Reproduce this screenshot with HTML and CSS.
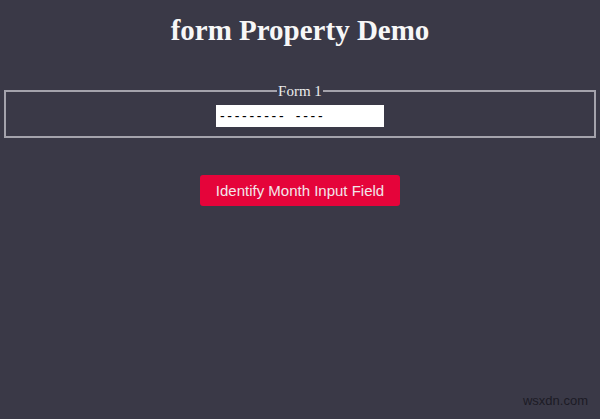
FILE: index.html
```html
<!DOCTYPE html>
<html>
<head>
<meta charset="utf-8">
<link rel="stylesheet" href="styles.css">
</head>
<body>
<h1 class="title">form Property Demo</h1>
<form class="demo-form">
  <fieldset class="group">
    <legend class="legend">Form 1</legend>
    <div class="field-row">
      <div class="month-input">--------- ----</div>
    </div>
  </fieldset>
</form>
<div class="actions">
  <button class="btn" type="button">Identify Month Input Field</button>
</div>
<div class="watermark">wsxdn.com</div>
</body>
</html>
```
FILE: styles.css
```css
html, body {
  margin: 0;
  padding: 0;
  height: 100%;
}
body {
  background: #3a3947;
  color: #f4f4f4;
  font-family: "Liberation Serif", "Times New Roman", serif;
  position: relative;
  overflow: hidden;
}
.title {
  margin: 14px 0 0;
  font-size: 29px;
  line-height: 32px;
  font-weight: bold;
  text-align: center;
  color: #f7f7f7;
}
.demo-form {
  margin: 37px 4px 0;
}
.group {
  margin: 0;
  border: 2px solid #a4a3ac;
  padding: 6px 8px 9px;
}
.legend {
  margin: 0 auto;
  padding: 0 1px;
  font-size: 15px;
  line-height: 16px;
  color: #ececec;
}
.field-row {
  display: flex;
  justify-content: center;
}
.month-input {
  width: 168px;
  height: 22px;
  box-sizing: border-box;
  background: #ffffff;
  color: #000;
  font-family: "Liberation Sans", Arial, sans-serif;
  font-size: 14px;
  line-height: 22px;
  padding-left: 4px;
  letter-spacing: 2.7px;
  word-spacing: 3px;
  white-space: pre;
}
.actions {
  display: flex;
  justify-content: center;
  margin-top: 37px;
}
.btn {
  width: 200px;
  height: 31px;
  border: none;
  border-radius: 3px;
  background: #e5043a;
  color: #f2e6ea;
  font-family: "Liberation Sans", Arial, sans-serif;
  font-size: 15px;
  padding: 0;
}
.watermark {
  position: absolute;
  right: 12px;
  bottom: 11px;
  font-family: "Liberation Sans", Arial, sans-serif;
  font-size: 13px;
  color: #1c1b25;
}
```
